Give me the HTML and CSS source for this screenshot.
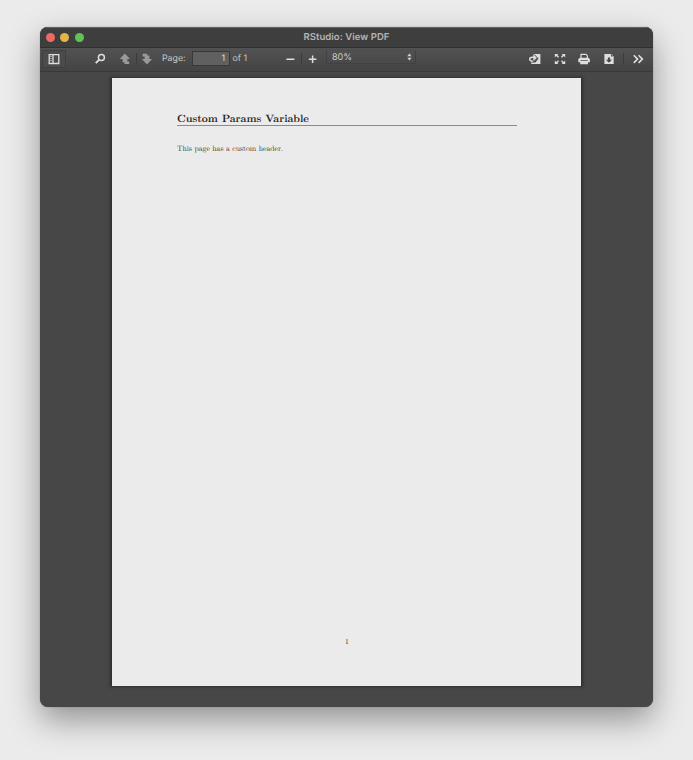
FILE: index.html
```html
<!DOCTYPE html>
<html lang="en">
<head>
<meta charset="utf-8">
<title>RStudio: View PDF</title>
<link rel="stylesheet" href="styles.css">
</head>
<body>
<main class="window">
  <header class="titlebar">
    <div class="lights"><i class="light red"></i><i class="light yellow"></i><i class="light green"></i></div>
    <h1>RStudio: View PDF</h1>
  </header>
  <nav class="toolbar">
    <div class="group left">
      <button class="tool sidebar" aria-label="Toggle Sidebar"><svg width="12" height="12" viewBox="0 0 12 12"><path fill="none" stroke="currentColor" stroke-width="1.3" d="M1.2 1.7h9.6v8.8H1.2zM5 1.7v8.8"/><path stroke="currentColor" stroke-width=".8" opacity=".7" d="M2 3.6h2M2 5.6h2M2 7.6h2"/></svg></button>
      <button class="tool" aria-label="Find"><svg width="12" height="12" viewBox="0 0 12 12"><circle cx="7.4" cy="4.5" r="3" fill="none" stroke="currentColor" stroke-width="1.5"/><path stroke="currentColor" stroke-width="2" d="M5.3 6.6 1.8 10.1"/></svg></button>
      <div class="pair pages">
        <button class="tool dim" aria-label="Previous Page"><svg width="12" height="12" viewBox="0 0 12 12"><path fill="currentColor" d="M5.8.6 11 6H8.4v2.4h1.8V11H5.4V9.2H3.6V6H.7z"/></svg></button>
        <button class="tool dim" aria-label="Next Page"><svg width="12" height="12" viewBox="0 0 12 12"><path fill="currentColor" d="M1.6.8h4.7v1.8h2.1V6h2.7L6 11.4.8 6h2.8V3.6h-2z"/></svg></button>
      </div>
      <span class="label">Page:</span>
      <span class="page-number">1</span>
      <span class="total">of 1</span>
    </div>
    <div class="group zoom">
      <div class="pair">
        <button class="tool" aria-label="Zoom Out"><svg width="12" height="12" viewBox="0 0 12 12"><path stroke="currentColor" stroke-width="1.6" d="M2.4 6.3h8"/></svg></button>
        <button class="tool" aria-label="Zoom In"><svg width="12" height="12" viewBox="0 0 12 12"><path stroke="currentColor" stroke-width="1.5" d="M2.8 6.3h7.6M6.6 2.5v7.6"/></svg></button>
      </div>
      <div class="scale"><span>80%</span><svg width="6" height="8" viewBox="0 0 6 8"><path fill="currentColor" d="M3.4.6 5.6 3.2H1.2zM3.4 7.4 1.2 4.8h4.4z"/></svg></div>
    </div>
    <div class="group right">
      <button class="tool" aria-label="Rotate"><svg width="12" height="12" viewBox="0 0 12 12"><path fill="currentColor" d="M4.2 1h7.2v10H2.2V9.6h4.2L9.6 5.4 6.2 1.9z"/><path fill="none" stroke="currentColor" stroke-width="1.5" d="M3.8 8.1C-.1 8.6-.2 4.2 3.2 4.2h2"/><path fill="currentColor" d="M4.3 1.3 8 4.6 4.3 8z"/><path fill="none" stroke="#7c7c7c" stroke-width=".8" d="M5.5 2 8.5 4.8 4.8 8.6"/></svg></button>
      <button class="tool" aria-label="Presentation Mode"><svg width="12" height="12" viewBox="0 0 12 12"><path fill="currentColor" d="M.8 1h3.6L3.3 2.1 5 3.8l-1 1-1.8-1.7L.8 4.5zM11.2 1v3.5L9.8 3.1 8 4.8l-1-1 1.7-1.7L7.6 1zM.8 11V7.5l1.4 1.4L4 7.2l1 1-1.7 1.7L4.4 11zM11.2 11H7.6l1.1-1.1L7 8.2l1-1 1.8 1.7 1.4-1.4z"/></svg></button>
      <button class="tool" aria-label="Print"><svg width="12" height="12" viewBox="0 0 12 12"><path fill="none" stroke="currentColor" stroke-width="1.2" d="M3 5V1.4h5l1.4 1.5V5"/><path fill="currentColor" d="M1.7 4.8h8.8l1.4 1.4v3H.3v-3z"/><path fill="#777" d="M2.5 7.1h7.2v1H2.5z"/><path fill="currentColor" d="M2.2 9h7.8v2.2H2.2z"/></svg></button>
      <button class="tool" aria-label="Download"><svg width="12" height="12" viewBox="0 0 12 12"><path fill="currentColor" d="M1.4.9h6.4l2.9 2.7V11H1.4z"/><path fill="#4a4a4a" d="M4.9 4.4h2.2v2.3h2L6 9.8 2.9 6.7h2zM7.9 1.5v2.1H10z"/></svg></button>
      <i class="divider"></i>
      <button class="tool more" aria-label="Tools"><svg width="12" height="12" viewBox="0 0 12 12"><path fill="none" stroke="currentColor" stroke-width="1.6" d="m1.8 2.3 3.8 3.8-3.8 3.8M6.6 2.3l3.8 3.8-3.8 3.8"/></svg></button>
    </div>
  </nav>
  <section class="viewer">
    <article class="page">
      <h2>Custom Params Variable</h2>
      <p>This page has a custom header.</p>
      <footer>1</footer>
    </article>
  </section>
</main>
</body>
</html>
```
FILE: styles.css
```css
* { box-sizing: border-box; }
body {
  margin: 0;
  height: 760px;
  padding: 27px 40px 0;
  overflow: hidden;
  background: #ebebeb;
  font-family: Inter, "Liberation Sans", sans-serif;
  text-rendering: geometricPrecision;
}
.window {
  width: 613px;
  height: 680px;
  overflow: hidden;
  border-radius: 8px;
  background: #474747;
  box-shadow: 0 0 1px #555, 0 13px 32px rgba(0, 0, 0, .38);
}
.titlebar {
  height: 21px;
  display: grid;
  grid-template-columns: 60px 1fr 60px;
  align-items: center;
  background: #3e3e3e;
  border-top: 1px solid #646464;
  border-bottom: 1px solid #303030;
}
.lights { display: flex; gap: 5.5px; padding-left: 5.7px; }
.light { width: 9px; height: 9px; border-radius: 50%; }
.red { background: #eb6b60; }
.yellow { background: #e5b448; }
.green { background: #60c354; }
h1 {
  margin: 0;
  text-align: center;
  color: #b5b5b5;
  font-size: 9.5px;
  line-height: 19px;
  font-weight: 600;
  letter-spacing: .06px;
}
.toolbar {
  height: 24px;
  display: flex;
  color: #dedede;
  background: linear-gradient(#525252, #444);
  border-bottom: 1px solid #393939;
  font-size: 8.8px;
}
.group, .pair { display: flex; align-items: center; }
.group { height: 22px; }
.tool {
  width: 22px;
  height: 20px;
  padding: 0;
  display: flex;
  align-items: center;
  justify-content: center;
  border: 0;
  color: inherit;
  background: none;
}
.tool svg { display: block; }
.dim { color: #999; }
.left { width: 239px; padding-left: 2px; }
.sidebar {
  width: 24px;
  height: 18px;
  margin-right: 23px;
  border: 1px solid #404040;
  background: #4b4b4b;
}
.pages { margin-left: 3px; }
.pair .tool + .tool::before {
  content: "";
  width: 1px;
  height: 12px;
  margin-right: 4px;
  margin-left: -5px;
  background: #3b3b3b;
}
.label, .total { color: #c8c8c8; line-height: 14px; white-space: nowrap; }
.label { width: 30px; margin-left: 4px; }
.page-number {
  width: 38px;
  height: 15px;
  margin-top: -1px;
  padding-right: 4px;
  border: 1px solid #383838;
  background: #606060;
  text-align: right;
  line-height: 14px;
}
.total { margin-left: 2.6px; }
.scale {
  display: flex;
  align-items: center;
  justify-content: space-between;
  width: 90px;
  height: 14px;
  margin: -4px 0 0 3px;
  padding: 0 3px 0 5px;
  border: 1px solid #414141;
  border-top-color: #4d4d4d;
  color: #cecece;
  font-size: 9px;
}
.right { margin-left: auto; padding-right: 4px; }
.right .tool { width: 24.5px; }
.right .more { width: 22px; }
.divider { width: 1px; height: 12px; margin: 0 3px 0 2px; background: #3b3b3b; }
.viewer { padding: 6px 0 0 71px; }
.page {
  display: flex;
  flex-direction: column;
  width: 471px;
  height: 608px;
  padding: 33px 64px 38px 65px;
  border: solid #303030;
  border-width: 0 1px;
  background: #ebebeb;
  box-shadow: 0 0 3px 1px #303030;
  color: #222;
  font-family: "Latin Modern Roman", "Liberation Serif", serif;
}
h2 {
  height: 15px;
  margin: 0;
  border-bottom: 1px solid #8b8b8b;
  font-size: 10.48px;
  line-height: 15px;
  white-space: nowrap;
}
.page p {
  margin: 17px 0 0;
  font-size: 7.67px;
  line-height: 12px;
  color: #333;
}
.page footer { margin-top: auto; text-align: center; font-size: 7.6px; line-height: 12px; }
```
